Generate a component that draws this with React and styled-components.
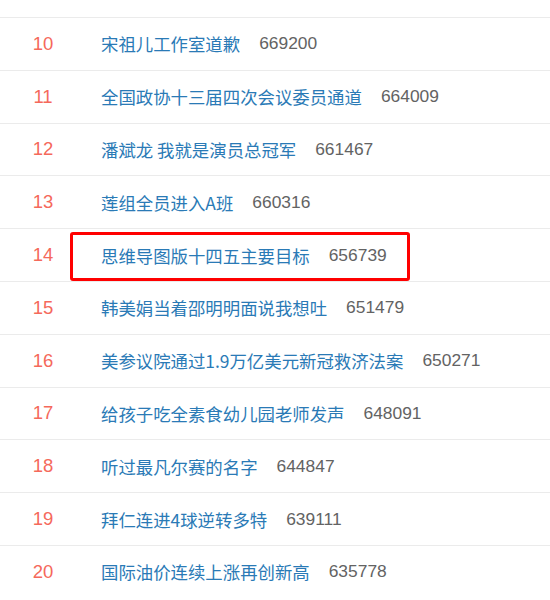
import React from "react";
import styled, { createGlobalStyle } from "styled-components";

const Global = createGlobalStyle`
  html, body { margin: 0; padding: 0; background: #fff; }
  body { font-family: "Liberation Sans", "Noto Sans CJK SC", sans-serif; }
`;

const List = styled.ul`
  list-style: none;
  margin: 0;
  padding: 17px 0 0;
  width: 550px;
  height: 600px;
  overflow: hidden;
  box-sizing: border-box;
`;

const Row = styled.li`
  position: relative;
  display: flex;
  align-items: center;
  height: 52.8px;
  box-sizing: border-box;
  border-top: 1px solid #ebebeb;
  font-size: 17.4px;
`;

const Rank = styled.span`
  width: 86px;
  text-align: center;
  color: #f5695b;
  font-size: 18.5px;
`;

const Title = styled.span`
  margin-left: 15px;
  color: #2a7ab6;
  font-family: "Noto Sans CJK SC", "Liberation Sans", sans-serif;
`;

const Count = styled.span`
  margin-left: 19px;
  color: #636363;
`;

const Highlight = styled.div`
  position: absolute;
  left: 70px;
  top: 3px;
  width: 340px;
  height: 49px;
  box-sizing: border-box;
  border: 3px solid #f00;
  border-radius: 3px;
  pointer-events: none;
`;

const items = [
  [10, "宋祖儿工作室道歉", "669200"],
  [11, "全国政协十三届四次会议委员通道", "664009"],
  [12, "潘斌龙 我就是演员总冠军", "661467"],
  [13, "莲组全员进入A班", "660316"],
  [14, "思维导图版十四五主要目标", "656739"],
  [15, "韩美娟当着邵明明面说我想吐", "651479"],
  [16, "美参议院通过1.9万亿美元新冠救济法案", "650271"],
  [17, "给孩子吃全素食幼儿园老师发声", "648091"],
  [18, "听过最凡尔赛的名字", "644847"],
  [19, "拜仁连进4球逆转多特", "639111"],
  [20, "国际油价连续上涨再创新高", "635778"],
];

export default function App() {
  return (
    <>
      <Global />
      <List>
        {items.map(([rank, title, count]) => (
          <Row key={rank}>
            <Rank>{rank}</Rank>
            <Title>{title}</Title>
            <Count>{count}</Count>
            {rank === 14 && <Highlight />}
          </Row>
        ))}
      </List>
    </>
  );
}
